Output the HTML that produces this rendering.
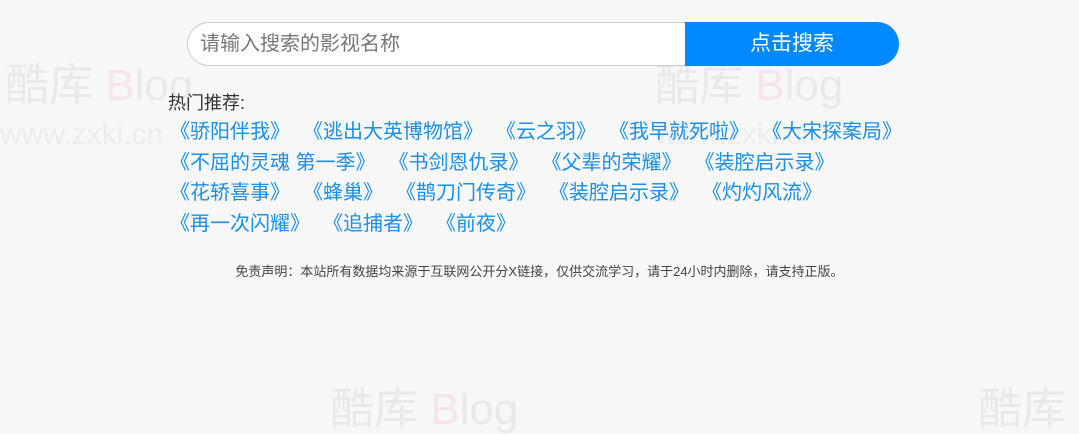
<!DOCTYPE html>
<html><head><meta charset="utf-8"><style>
body{margin:0;width:1079px;height:433px;background:#f7f7f7;font-family:"Liberation Sans","Noto Sans CJK SC",sans-serif;position:relative;overflow:hidden}
.wm{position:absolute;font-size:44px;color:rgba(0,0,0,0.055);white-space:nowrap;line-height:1}
.wm2{position:absolute;font-size:30px;color:rgba(0,0,0,0.045);white-space:nowrap}
.search{position:absolute;left:187px;top:22px;width:712px;height:44px;display:flex}
.inp{flex:0 0 498px;box-sizing:border-box;border:1px solid #ccc;border-right:none;border-radius:22px 0 0 22px;background:#fff;font-size:20px;color:#777;line-height:42px;padding-left:12px}
.btn{flex:1;background:#0088ff;color:#fff;font-size:21px;text-align:center;line-height:44px;border-radius:0 22px 22px 0}
.hot{position:absolute;left:168px;top:89px;font-size:18px;color:#333}
.list{position:absolute;left:170px;top:117px;width:800px;font-size:20px;line-height:30.5px;color:#1a8fe6}
.list span{margin-right:23px;white-space:nowrap}
.disc{position:absolute;left:0;width:1079px;top:261px;text-align:center;font-size:13px;color:#444}
</style></head><body>
<div class="wm" style="left:5px;top:64px">酷库 <span style="color:rgba(255,0,0,0.07)">B</span>log</div>
<div class="wm2" style="left:0px;top:118px">www.zxki.cn</div>
<div class="wm" style="left:655px;top:64px">酷库 <span style="color:rgba(255,0,0,0.07)">B</span>log</div>
<div class="wm2" style="left:655px;top:118px">www.zxki.cn</div>
<div class="wm" style="left:330px;top:388px">酷库 <span style="color:rgba(255,0,0,0.07)">B</span>log</div>
<div class="wm" style="left:978px;top:388px">酷库</div>
<div class="search"><div class="inp">请输入搜索的影视名称</div><div class="btn">点击搜索</div></div>
<div class="hot">热门推荐:</div>
<div class="list">
<span>《骄阳伴我》</span><span>《逃出大英博物馆》</span><span>《云之羽》</span><span>《我早就死啦》</span><span>《大宋探案局》</span><br>
<span>《不屈的灵魂 第一季》</span><span>《书剑恩仇录》</span><span>《父辈的荣耀》</span><span>《装腔启示录》</span><br>
<span>《花轿喜事》</span><span>《蜂巢》</span><span>《鹊刀门传奇》</span><span>《装腔启示录》</span><span>《灼灼风流》</span><br>
<span>《再一次闪耀》</span><span>《追捕者》</span><span>《前夜》</span>
</div>
<div class="disc">免责声明：本站所有数据均来源于互联网公开分X链接，仅供交流学习，请于24小时内删除，请支持正版。</div>
</body></html>
